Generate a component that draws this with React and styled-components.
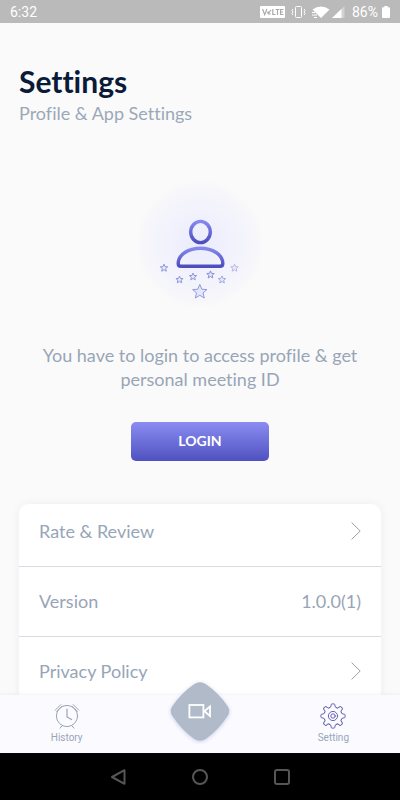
import React from 'react';
import styled, { createGlobalStyle, css } from 'styled-components';

const GlobalStyle = createGlobalStyle`
  *, *::before, *::after {
    box-sizing: border-box;
  }
  body {
    margin: 0;
    background: #fafafa;
    font-family: Lato, "Open Sans", sans-serif;
    font-variant-ligatures: none;
  }
`;

const STAR = 'M0 -8 L2.2 -2.8 L7.8 -2.4 L3.5 1.2 L4.9 6.8 L0 3.8 L-4.9 6.8 L-3.5 1.2 L-7.8 -2.4 L-2.2 -2.8 Z';

const stars = [
  { x: 34, y: 93, scale: 0.48, opacity: 0.75 },
  { x: 49.5, y: 104.7, scale: 0.46, opacity: 0.75 },
  { x: 63, y: 101.7, scale: 0.46, opacity: 0.75 },
  { x: 80.5, y: 99.7, scale: 0.48, opacity: 0.8 },
  { x: 92, y: 104.7, scale: 0.48, opacity: 0.6 },
  { x: 104.5, y: 93, scale: 0.48, opacity: 0.45 },
  { x: 69.8, y: 116.8, scale: 0.92, opacity: 0.75 },
];

const ProfileArt = () => (
  <svg width="140" height="140" viewBox="0 0 140 140" aria-hidden="true">
    <defs>
      <radialGradient id="halo">
        <stop offset="0" stopColor="#ebecfc" />
        <stop offset="0.5" stopColor="#f1f2fc" />
        <stop offset="0.85" stopColor="#f6f6fb" />
        <stop offset="1" stopColor="#fafafa" />
      </radialGradient>
      <linearGradient id="head" x1="0" y1="0" x2="0" y2="1">
        <stop offset="0" stopColor="#8688ee" />
        <stop offset="1" stopColor="#4c4ebd" />
      </linearGradient>
    </defs>
    <circle cx="70" cy="69" r="64" fill="url(#halo)" />
    <g fill="none" stroke="url(#head)" strokeWidth="3.4" strokeLinejoin="round">
      <ellipse cx="70.5" cy="57" rx="9.8" ry="10.6" />
      <path d="M51 91.3 Q48.2 91.3 48.2 88.5 C48.2 79.5 58.5 73.2 70.5 73.2 C82.5 73.2 92.8 79.5 92.8 88.5 Q92.8 91.3 90 91.3 Z" />
    </g>
    {stars.map((star) => (
      <path
        key={`${star.x}-${star.y}`}
        d={STAR}
        transform={`translate(${star.x} ${star.y}) scale(${star.scale})`}
        fill="#dfe3fa"
        stroke="#7078cf"
        strokeWidth={1 / star.scale}
        strokeLinejoin="round"
        opacity={star.opacity}
      />
    ))}
  </svg>
);

const StatusIcons = () => (
  <svg width="86" height="14" viewBox="0 0 86 14" aria-hidden="true">
    <rect x="0" y="1" width="25" height="12" rx="1" fill="#fff" />
    <g fill="none" stroke="#a9a9a9" strokeWidth="1.2">
      <path d="M2.5 4 L4.7 9.6 L6.9 4" />
      <path d="M8 9 L11 5 M8.3 6.4 A1.4 1.4 0 1 0 10.4 8.6" />
      <path d="M12.8 4 V9.5 H15.4 M15.6 4.5 H19.4 M17.5 4.5 V10 M23.5 4.5 H20.6 V9.5 H23.5 M20.6 7 H23" />
    </g>
    <g fill="none" stroke="#fff" strokeWidth="1">
      <rect x="35.5" y="1.5" width="6" height="11" rx="1" />
      <path d="M33 4 L32 5.5 L33 7 L32 8.5 L33 10 M44 4 L45 5.5 L44 7 L45 8.5 L44 10" />
    </g>
    <path d="M52.5 4.4 Q61 -1.5 69.5 4.4 L61 13 Z" fill="#fff" />
    <path d="M52 7.5 H55 M52 10 H57 M54 12.5 H57" stroke="#fff" strokeWidth="1" />
    <path d="M72 13 L84.5 1 V13 Z" fill="#fff" fillOpacity="0.35" />
    <path d="M72 13 L81.5 4 V13 Z" fill="#fff" />
  </svg>
);

const BatteryIcon = () => (
  <svg width="8" height="12" viewBox="0 0 8 12" aria-hidden="true">
    <path d="M2.3 0 H5.7 V1.3 H7 Q8 1.3 8 2.3 V11 Q8 12 7 12 H1 Q0 12 0 11 V2.3 Q0 1.3 1 1.3 H2.3 Z" fill="#fff" />
  </svg>
);

const ChevronIcon = () => (
  <svg width="10" height="18" viewBox="0 0 10 18" fill="none" stroke="#9b9fa5" aria-hidden="true">
    <path d="M0.6 0.6 L9.2 9 L0.6 17.4" />
  </svg>
);

const AlarmIcon = () => (
  <svg width="26" height="26" viewBox="0 0 26 26" fill="none" stroke="#9aa4b4" strokeLinecap="round" aria-hidden="true">
    <circle cx="13" cy="13" r="10.6" />
    <path d="M13 6 V14 L17.6 16.6" strokeWidth="1.2" />
    <path d="M1.2 7.2 L6.8 1.6 M2.8 8.4 L8 3.2 M24.8 7.2 L19.2 1.6 M23.2 8.4 L18 3.2" />
    <path d="M8.2 22.6 L6 25.2 M17.8 22.6 L20 25.2" />
  </svg>
);

const GearIcon = () => (
  <svg width="26" height="26" viewBox="-13 -13 26 26" fill="none" stroke="#6662b4" strokeLinecap="round" aria-hidden="true">
    {[0, 45, 90, 135, 180, 225, 270, 315].map((angle) => (
      <path
        key={angle}
        transform={`rotate(${angle})`}
        d="M-3.5 -8.4 Q-2 -8.4 -2 -10 L-1.8 -11.4 Q-1.6 -12.1 -1 -12.1 H1 Q1.6 -12.1 1.8 -11.4 L2 -10 Q2 -8.4 3.5 -8.4"
      />
    ))}
    <circle r="4.6" />
    <circle r="2.2" />
  </svg>
);

const MeetIcon = () => (
  <svg width="62" height="64" viewBox="0 0 62 64" aria-hidden="true">
    <path
      d="M25 4.3 Q31 0 37 4.3 Q50 13.5 58.5 26 Q62 31 58.5 36 Q50 49.5 37 58.7 Q31 63 25 58.7 Q12 49.5 3.5 36 Q0 31 3.5 26 Q12 13.5 25 4.3 Z"
      fill="#b0bac9"
    />
    <g fill="none" stroke="#fff" strokeWidth="1.8" strokeLinejoin="miter">
      <rect x="20.4" y="25" width="14" height="12.4" />
      <path d="M35.4 31.2 L41 26.4 V36 Z" />
    </g>
  </svg>
);

const App = () => {
  return (
    <>
      <GlobalStyle />
      <Screen>
        <StatusBar>
          <span>6:32</span>
          <StatusGroup>
            <StatusIcons />
            <span>86%</span>
            <BatteryIcon />
          </StatusGroup>
        </StatusBar>

        <Content>
          <Title>Settings</Title>
          <Subtitle>Profile &amp; App Settings</Subtitle>

          <LoginPanel>
            <ProfileArt />
            <Message>You have to login to access profile &amp; get personal meeting ID</Message>
            <LoginButton type="button">LOGIN</LoginButton>
          </LoginPanel>

          <Card>
            <Row as="a" href="#rate">
              Rate &amp; Review
              <ChevronIcon />
            </Row>
            <Row>
              <span>Version</span>
              <span>1.0.0(1)</span>
            </Row>
            <Row as="a" href="#privacy">
              Privacy Policy
              <ChevronIcon />
            </Row>
          </Card>
        </Content>

        <TabBar>
          <Tab href="#history">
            <AlarmIcon />
            History
          </Tab>
          <MeetButton type="button" aria-label="Start meeting">
            <MeetIcon />
          </MeetButton>
          <Tab href="#setting">
            <GearIcon />
            Setting
          </Tab>
        </TabBar>

        <SystemBar>
          <SystemButton type="button" aria-label="Back">
            <svg width="16" height="16" viewBox="0 0 16 16" aria-hidden="true">
              <path d="M14.5 1.2 V14.8 L2 8 Z" />
            </svg>
          </SystemButton>
          <SystemButton type="button" aria-label="Home">
            <svg width="16" height="16" viewBox="0 0 16 16" aria-hidden="true">
              <circle cx="8" cy="8" r="7" />
            </svg>
          </SystemButton>
          <SystemButton type="button" aria-label="Recent apps">
            <svg width="16" height="16" viewBox="0 0 16 16" aria-hidden="true">
              <rect x="1" y="1" width="14" height="14" rx="2" />
            </svg>
          </SystemButton>
        </SystemBar>
      </Screen>
    </>
  );
};

const resetButton = css`
  border: none;
  padding: 0;
  background: none;
  cursor: pointer;
`;

const Screen = styled.div`
  display: flex;
  flex-direction: column;
  height: 100vh;
  overflow: hidden;
`;

const StatusBar = styled.header`
  flex: none;
  display: flex;
  align-items: center;
  justify-content: space-between;
  height: 23px;
  padding: 0 10px;
  background: #bababa;
  color: #fff;
  font-family: Roboto, sans-serif;
  font-size: 14px;
`;

const StatusGroup = styled.div`
  display: flex;
  align-items: center;
  gap: 4px;

  svg:first-child {
    margin-right: 2px;
  }
`;

const Content = styled.main`
  flex: 1;
  min-height: 0;
  overflow: hidden;
  padding: 40px 19px 0;
`;

const Title = styled.h1`
  margin: 0;
  color: #0a1a38;
  font-size: 30px;
  font-weight: 700;
  line-height: 36px;
`;

const Subtitle = styled.p`
  margin: 2px 0 0;
  color: #9ba8b9;
  font-size: 18px;
  line-height: 24px;
`;

const LoginPanel = styled.section`
  display: flex;
  flex-direction: column;
  align-items: center;
  padding-top: 50px;
`;

const Message = styled.p`
  max-width: 322px;
  margin: 28px 0 31px;
  color: #98a5b7;
  font-size: 18px;
  line-height: 24px;
  text-align: center;
`;

const LoginButton = styled.button`
  ${resetButton}
  width: 138px;
  height: 39px;
  padding-bottom: 2px;
  border-radius: 5px;
  background: linear-gradient(#8b8df2, #4f51c0);
  color: #fff;
  font-family: inherit;
  font-size: 14px;
  font-weight: 700;
`;

const Card = styled.div`
  margin-top: 43px;
  border-radius: 10px;
  background: #fff;
  box-shadow: 0 0 8px rgba(90, 90, 180, 0.07);
`;

const Row = styled.div`
  display: flex;
  align-items: center;
  justify-content: space-between;
  height: 70px;
  padding: 0 20px 2px;
  border-bottom: 1px solid #d8dce0;
  color: #98a5b7;
  font-size: 18px;
  text-decoration: none;

  &:first-child {
    height: 63px;
    padding-bottom: 8px;
  }
`;

const TabBar = styled.nav`
  position: relative;
  flex: none;
  display: grid;
  grid-template-columns: repeat(3, 1fr);
  align-items: center;
  justify-items: center;
  height: 58px;
  background: #fbfbff;
  box-shadow: 0 0 4px rgba(100, 100, 200, 0.12);
`;

const Tab = styled.a`
  display: flex;
  flex-direction: column;
  align-items: center;
  gap: 3px;
  padding-bottom: 2px;
  color: #98a5b7;
  font-family: Roboto, sans-serif;
  font-size: 10px;
  line-height: 12px;
  text-decoration: none;
`;

const MeetButton = styled.button`
  ${resetButton}
  display: flex;
  margin: -28px 0 -4px;
  filter: drop-shadow(0 1px 2px rgba(110, 130, 200, 0.35));
`;

const SystemBar = styled.footer`
  flex: none;
  display: flex;
  align-items: center;
  justify-content: center;
  gap: 66px;
  height: 47px;
  background: #000;
`;

const SystemButton = styled.button`
  ${resetButton}
  display: flex;

  svg {
    fill: none;
    stroke: #565656;
    stroke-width: 2;
    stroke-linejoin: round;
  }
`;

export default App;
